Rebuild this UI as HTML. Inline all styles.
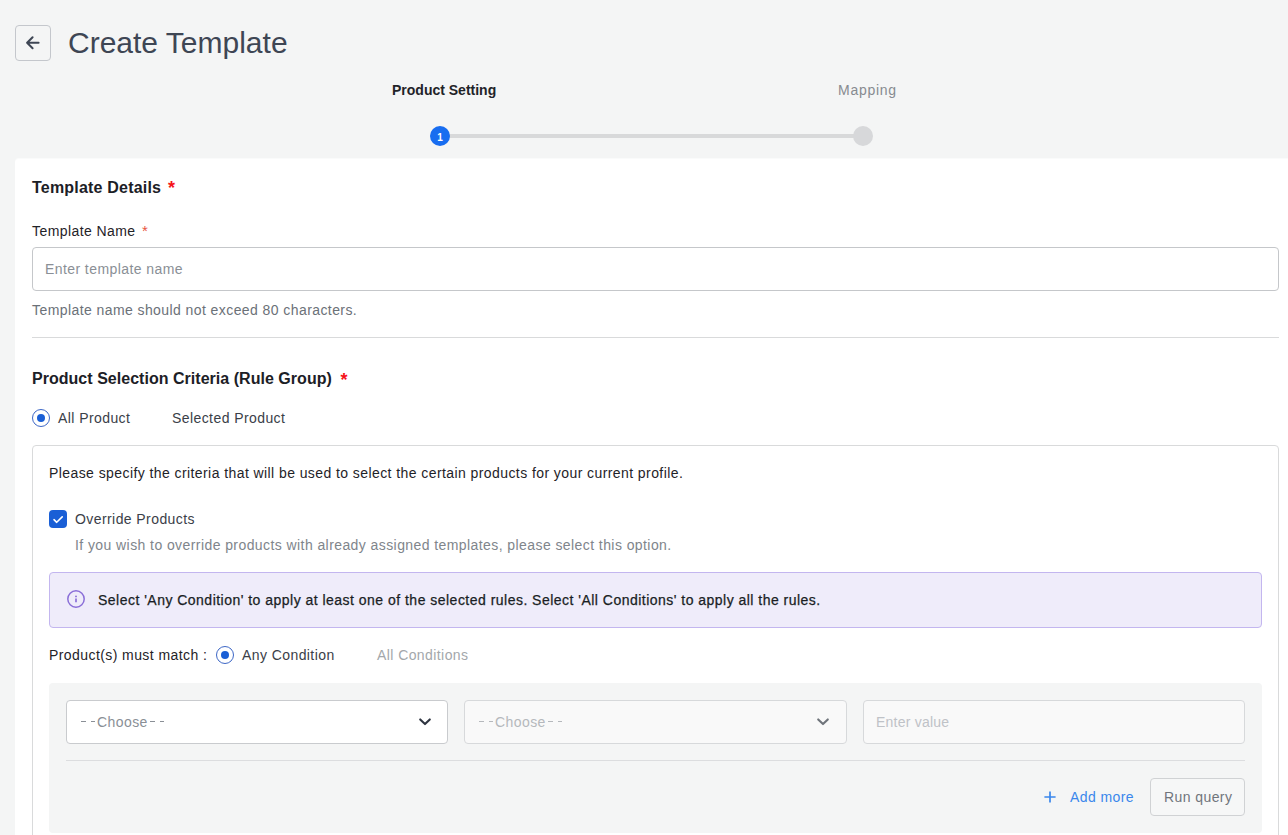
<!DOCTYPE html>
<html><head><meta charset="utf-8">
<style>
*{box-sizing:border-box;margin:0;padding:0}
html,body{width:1288px;height:835px;overflow:hidden;background:#f4f5f5;font-family:"Liberation Sans",sans-serif;color:#1f2328}
.a{position:absolute;white-space:nowrap;line-height:1;letter-spacing:0.42px}
.back{position:absolute;left:15px;top:25px;width:36px;height:36px;border:1px solid #c4c7cc;border-radius:4px;background:#f4f5f5}
.title{left:68px;top:27.5px;font-size:30px;color:#3e4654;letter-spacing:0}
.step1{left:392px;top:83px;font-size:14px;font-weight:bold;color:#1f2328;letter-spacing:0}
.step2{left:838px;top:83px;font-size:14px;color:#878b90;letter-spacing:0.74px}
.line{position:absolute;left:440px;top:134px;width:423px;height:4px;background:#d8d9da}
.c1{position:absolute;left:430px;top:126px;width:20px;height:20px;border-radius:50%;background:#186df0;color:#fff;font-size:10px;text-align:center;line-height:24px;font-weight:bold}
.c2{position:absolute;left:853px;top:126px;width:20px;height:20px;border-radius:50%;background:#d7d8da}
.card{position:absolute;left:15px;top:159px;width:1280px;height:700px;background:#fff;border-radius:4px;box-shadow:0 -1px 0 #fafbfb}
.h{font-size:16px;font-weight:bold;color:#1c2026}
.req{color:#e02424}
.lbl{font-size:14px;color:#1f2328}
.input{position:absolute;left:32px;top:247px;width:1247px;height:44px;border:1px solid #c5c7ca;border-radius:4px;background:#fff}
.ph{font-size:14px;color:#8a8f96}
.help{font-size:14px;color:#6b7178}
.divider{position:absolute;left:32px;top:337px;width:1247px;height:1px;background:#d9dadb}
.radio{position:absolute;width:18px;height:18px;border:1.5px solid #3d67c6;border-radius:50%}
.radio:after{content:"";position:absolute;left:3.5px;top:3.5px;width:8px;height:8px;border-radius:50%;background:#1a5fd6}
.box{position:absolute;left:32px;top:445px;width:1247px;height:500px;border:1px solid #d9dadb;border-radius:4px}
.chk{position:absolute;left:49px;top:510px;width:18px;height:18px;background:#1a5fd6;border-radius:4px}
.info{position:absolute;left:49px;top:572px;width:1213px;height:56px;background:#efecfa;border:1px solid #c3b6ef;border-radius:4px}
.gray{position:absolute;left:49px;top:683px;width:1213px;height:149.5px;background:#f4f5f5;border-radius:4px}
.sel{position:absolute;top:700px;height:44px;border:1px solid #c9cbce;border-radius:4px;background:#fff}
.sel2{background:#f9f9f9;border-color:#d7d9db}
.rdiv{position:absolute;left:66px;top:760px;width:1179px;height:1px;background:#dcdddf}
.dash{position:absolute;top:721.2px;width:4.6px;height:1.1px}
.runq{position:absolute;left:1150px;top:778px;width:95px;height:37.5px;border:1px solid #d0d2d4;border-radius:4px;background:#f6f7f7}
</style></head>
<body>
<div class="back"><svg width="36" height="36" viewBox="0 0 36 36" style="position:absolute;left:-1px;top:-1px"><path d="M23.6 17.8H12.3M17.6 12.3L12.1 17.8l5.5 5.5" fill="none" stroke="#3e4654" stroke-width="2" stroke-linecap="round" stroke-linejoin="round"/></svg></div>
<div class="a title">Create Template</div>

<div class="a step1">Product Setting</div>
<div class="a step2">Mapping</div>
<div class="line"></div>
<div class="c1">1</div>
<div class="c2"></div>

<div class="card"></div>

<div class="a h" style="left:32px;top:180px;letter-spacing:0.2px">Template Details</div>
<div class="a req" style="left:168px;top:178.5px;font-size:18px;font-weight:bold;color:#f5141a">*</div>
<div class="a lbl" style="left:32px;top:224px">Template Name</div>
<div class="a req" style="left:142px;top:223px;font-size:15px;color:#e8553f">*</div>
<div class="input"></div>
<div class="a ph" style="left:45px;top:262px">Enter template name</div>
<div class="a help" style="left:32px;top:303px">Template name should not exceed 80 characters.</div>
<div class="divider"></div>

<div class="a h" style="left:32px;top:371px;letter-spacing:0.03px">Product Selection Criteria (Rule Group)</div>
<div class="a req" style="left:340.5px;top:370.5px;font-size:18px;font-weight:bold;color:#f5141a">*</div>
<div class="radio" style="left:32px;top:409px"></div>
<div class="a lbl" style="left:58px;top:411px;color:#3a4048">All Product</div>
<div class="a lbl" style="left:172px;top:411px;color:#3a4048">Selected Product</div>

<div class="box"></div>
<div class="a lbl" style="left:49px;top:466px">Please specify the criteria that will be used to select the certain products for your current profile.</div>
<div class="chk"><svg width="18" height="18" viewBox="0 0 18 18"><path d="M5 9.7l2.7 2.6L13.2 6.9" fill="none" stroke="#fff" stroke-width="1.6" stroke-linecap="round" stroke-linejoin="round"/></svg></div>
<div class="a lbl" style="left:75px;top:512px;color:#3a4048">Override Products</div>
<div class="a help" style="left:75px;top:538px;color:#80858b">If you wish to override products with already assigned templates, please select this option.</div>

<div class="info"></div>
<svg style="position:absolute;left:66px;top:590px" width="20" height="20" viewBox="0 0 20 20"><circle cx="10" cy="9" r="8.2" fill="none" stroke="#8b6fd8" stroke-width="1.5"/><path d="M10 8.6v3.6" stroke="#8b6fd8" stroke-width="1.7" stroke-linecap="butt"/><circle cx="10" cy="6.4" r="0.95" fill="#8b6fd8"/></svg>
<div class="a lbl" style="left:98px;top:593px;color:#1a1e24;letter-spacing:0.48px;-webkit-text-stroke:0.25px #1a1e24">Select 'Any Condition' to apply at least one of the selected rules. Select 'All Conditions' to apply all the rules.</div>

<div class="a lbl" style="left:49px;top:648px">Product(s) must match :</div>
<div class="radio" style="left:216px;top:646px"></div>
<div class="a lbl" style="left:242px;top:648px;color:#3a4048">Any Condition</div>
<div class="a lbl" style="left:377px;top:648px;color:#a3a7ab">All Conditions</div>

<div class="gray"></div>
<div class="sel" style="left:66px;width:382px"></div>
<div class="a ph" style="left:97px;top:715px">Choose</div><div class="dash" style="left:81px;background:#8a8f96"></div><div class="dash" style="left:90.5px;background:#8a8f96"></div><div class="dash" style="left:150px;background:#8a8f96"></div><div class="dash" style="left:159.5px;background:#8a8f96"></div>
<svg style="position:absolute;left:417px;top:716px" width="16" height="11" viewBox="0 0 16 11"><path d="M3.2 3.4L8 8.1l4.8-4.7" fill="none" stroke="#2e3440" stroke-width="2.1" stroke-linecap="round" stroke-linejoin="round"/></svg>
<div class="sel sel2" style="left:464px;width:383px"></div>
<div class="a ph" style="left:495px;top:715px;color:#b5b8bc">Choose</div><div class="dash" style="left:479px;background:#b5b8bc"></div><div class="dash" style="left:488.5px;background:#b5b8bc"></div><div class="dash" style="left:548px;background:#b5b8bc"></div><div class="dash" style="left:557.5px;background:#b5b8bc"></div>
<svg style="position:absolute;left:815px;top:716px" width="16" height="11" viewBox="0 0 16 11"><path d="M3.2 3.4L8 8.1l4.8-4.7" fill="none" stroke="#6f747b" stroke-width="2.1" stroke-linecap="round" stroke-linejoin="round"/></svg>
<div class="sel sel2" style="left:863px;width:382px"></div>
<div class="a ph" style="left:876px;top:715px;color:#bfc2c7;letter-spacing:0.22px">Enter value</div>
<div class="rdiv"></div>
<svg style="position:absolute;left:1043px;top:790px" width="14" height="14" viewBox="0 0 14 14"><path d="M7 1.4v11.2M1.4 7h11.2" stroke="#3a87ec" stroke-width="1.7" stroke-linecap="butt"/></svg>
<div class="a lbl" style="left:1070px;top:790px;color:#3a87ec">Add more</div>
<div class="runq"></div>
<div class="a lbl" style="left:1164px;top:790px;color:#70757c">Run query</div>
</body></html>
